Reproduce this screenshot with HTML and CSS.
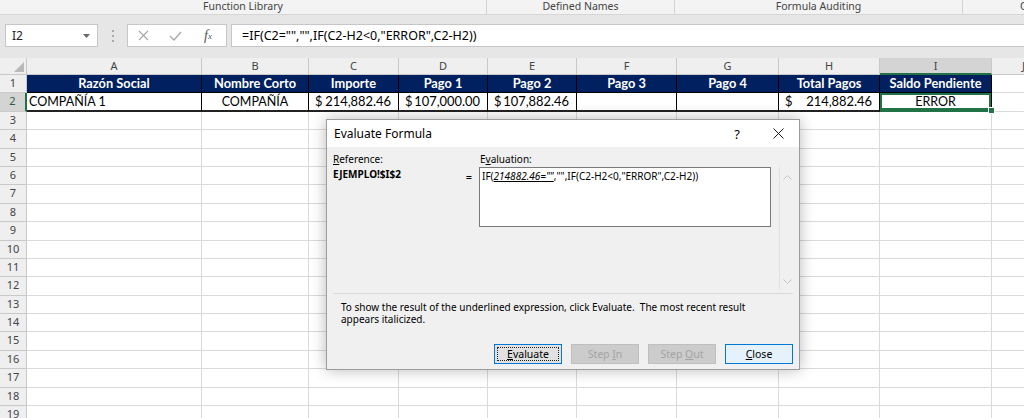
FILE: index.html
```html
<!DOCTYPE html>
<html lang="es">
<head>
    <meta charset="UTF-8">
    <title>Evaluate Formula</title>
    <link rel="stylesheet" href="styles.css">
</head>
<body>
    <div class="ribbon-labels">
        <div class="group group-functions">Function Library</div>
        <div class="group group-names">Defined Names</div>
        <div class="group group-auditing">Formula Auditing</div>
        <div class="group group-calc">Calculation</div>
    </div>

    <div class="formula-bar">
        <div class="name-box">
            <span>I2</span>
            <svg width="7" height="4" viewBox="0 0 7 4"><path d="M0 0h7L3.5 4z" fill="#6a6a6a"/></svg>
        </div>
        <div class="grip">
            <svg width="2" height="12" viewBox="0 0 2 12"><rect y="0" width="2" height="2" fill="#a8a8a8"/><rect y="5" width="2" height="2" fill="#a8a8a8"/><rect y="10" width="2" height="2" fill="#a8a8a8"/></svg>
        </div>
        <div class="fx-buttons">
            <span class="fx-icon"><svg width="11" height="11" viewBox="0 0 11 11"><path d="M1 1l9 9M10 1l-9 9" stroke="#a6a6a6" stroke-width="1.1" fill="none"/></svg></span>
            <span class="fx-icon"><svg width="13" height="10" viewBox="0 0 13 10"><path d="M1 5l4 4 7-8" stroke="#a6a6a6" stroke-width="1.2" fill="none"/></svg></span>
            <span class="fx-icon fx-text">f<sub>x</sub></span>
        </div>
        <div class="formula-input">=IF(C2="","",IF(C2-H2&lt;0,"ERROR",C2-H2))</div>
    </div>

    <div class="sheet">
        <div class="row col-heads">
            <div class="corner"><svg width="10" height="10" viewBox="0 0 10 10"><path d="M10 0v10H0z" fill="#b9b9b9"/></svg></div>
            <div>A</div><div>B</div><div>C</div><div>D</div><div>E</div>
            <div>F</div><div>G</div><div>H</div><div class="picked">I</div><div>J</div>
        </div>

        <div class="row titles">
            <div class="rh">1</div>
            <div class="th">Razón Social</div>
            <div class="th">Nombre Corto</div>
            <div class="th">Importe</div>
            <div class="th">Pago 1</div>
            <div class="th">Pago 2</div>
            <div class="th">Pago 3</div>
            <div class="th">Pago 4</div>
            <div class="th">Total Pagos</div>
            <div class="th">Saldo Pendiente</div>
            <div></div>
        </div>

        <div class="row data">
            <div class="rh picked">2</div>
            <div class="td">COMPAÑÍA 1</div>
            <div class="td center">COMPAÑÍA</div>
            <div class="td acct"><span>$</span><span>214,882.46</span></div>
            <div class="td acct"><span>$</span><span>107,000.00</span></div>
            <div class="td acct"><span>$</span><span>107,882.46</span></div>
            <div class="td"></div>
            <div class="td"></div>
            <div class="td acct"><span>$</span><span>214,882.46</span></div>
            <div class="td center selected">ERROR</div>
            <div></div>
        </div>

        <div class="row"><div class="rh">3</div><div></div><div></div><div></div><div></div><div></div><div></div><div></div><div></div><div></div><div></div></div>
        <div class="row"><div class="rh">4</div><div></div><div></div><div></div><div></div><div></div><div></div><div></div><div></div><div></div><div></div></div>
        <div class="row"><div class="rh">5</div><div></div><div></div><div></div><div></div><div></div><div></div><div></div><div></div><div></div><div></div></div>
        <div class="row"><div class="rh">6</div><div></div><div></div><div></div><div></div><div></div><div></div><div></div><div></div><div></div><div></div></div>
        <div class="row"><div class="rh">7</div><div></div><div></div><div></div><div></div><div></div><div></div><div></div><div></div><div></div><div></div></div>
        <div class="row"><div class="rh">8</div><div></div><div></div><div></div><div></div><div></div><div></div><div></div><div></div><div></div><div></div></div>
        <div class="row"><div class="rh">9</div><div></div><div></div><div></div><div></div><div></div><div></div><div></div><div></div><div></div><div></div></div>
        <div class="row"><div class="rh">10</div><div></div><div></div><div></div><div></div><div></div><div></div><div></div><div></div><div></div><div></div></div>
        <div class="row"><div class="rh">11</div><div></div><div></div><div></div><div></div><div></div><div></div><div></div><div></div><div></div><div></div></div>
        <div class="row"><div class="rh">12</div><div></div><div></div><div></div><div></div><div></div><div></div><div></div><div></div><div></div><div></div></div>
        <div class="row"><div class="rh">13</div><div></div><div></div><div></div><div></div><div></div><div></div><div></div><div></div><div></div><div></div></div>
        <div class="row"><div class="rh">14</div><div></div><div></div><div></div><div></div><div></div><div></div><div></div><div></div><div></div><div></div></div>
        <div class="row"><div class="rh">15</div><div></div><div></div><div></div><div></div><div></div><div></div><div></div><div></div><div></div><div></div></div>
        <div class="row"><div class="rh">16</div><div></div><div></div><div></div><div></div><div></div><div></div><div></div><div></div><div></div><div></div></div>
        <div class="row"><div class="rh">17</div><div></div><div></div><div></div><div></div><div></div><div></div><div></div><div></div><div></div><div></div></div>
        <div class="row"><div class="rh">18</div><div></div><div></div><div></div><div></div><div></div><div></div><div></div><div></div><div></div><div></div></div>
        <div class="row"><div class="rh">19</div><div></div><div></div><div></div><div></div><div></div><div></div><div></div><div></div><div></div><div></div></div>
    </div>

    <div class="dialog">
        <div class="dialog-title">
            <span>Evaluate Formula</span>
            <span class="title-btn help">?</span>
            <span class="title-btn close-x"><svg width="11" height="11" viewBox="0 0 11 11"><path d="M0.5 0.5l10 10M10.5 0.5l-10 10" stroke="#1a1a1a" stroke-width="1" fill="none"/></svg></span>
        </div>
        <div class="dialog-body">
            <div class="eval-grid">
                <div class="label"><u>R</u>eference:</div>
                <div></div>
                <div class="label">E<u>v</u>aluation:</div>
                <div></div>
                <div></div>

                <div class="ref-value">EJEMPLO!$I$2</div>
                <div class="equals">=</div>
                <div class="eval-box">IF(<span class="current">214882.46=""</span>,"",IF(C2-H2&lt;0,"ERROR",C2-H2))</div>
                <div></div>
                <div class="scroll">
                    <svg width="9" height="5" viewBox="0 0 9 5"><path d="M0.5 4.5l4-4 4 4" stroke="#c4c4c4" fill="none"/></svg>
                    <svg width="9" height="5" viewBox="0 0 9 5"><path d="M0.5 0.5l4 4 4-4" stroke="#c4c4c4" fill="none"/></svg>
                </div>
            </div>
            <div class="separator"></div>
            <p class="message">To show the result of the underlined expression, click Evaluate.&nbsp; The most recent result appears italicized.</p>
            <div class="buttons">
                <button class="btn focused"><u>E</u>valuate</button>
                <button class="btn" disabled>Step <u>I</u>n</button>
                <button class="btn" disabled>Step <u>O</u>ut</button>
                <button class="btn default"><u>C</u>lose</button>
            </div>
        </div>
    </div>
</body>
</html>
```

FILE: styles.css
```css
:root {
    --chrome-bg: #e6e6e6;
    --grid-line: #dadada;
    --header-bg: #efefef;
    --header-line: #c9c9c9;
    --header-picked: #d4d4d4;
    --excel-green: #217346;
    --navy: #002060;
    --dialog-bg: #f0f0f0;
    --ui-font: "Noto Sans", "Open Sans", sans-serif;
    --cell-font: Lato, "Liberation Sans", sans-serif;
    --cols: 27px 175px 107px 90px 89px 89px 100px 102px 101px 112px 64px;
}

body {
    margin: 0;
    width: 1024px;
    height: 418px;
    overflow: hidden;
    position: relative;
    background-color: var(--chrome-bg);
    font-family: var(--ui-font);
    color: #000;
}

/* ribbon group captions */
.ribbon-labels {
    display: flex;
    height: 14px;
    background-color: #f3f3f3;
    border-bottom: 1px solid #d6d6d6;
    font-size: 10.5px;
    line-height: 13px;
    color: #444;
    white-space: nowrap;
    overflow: hidden;
}

.group {
    flex-shrink: 0;
    text-align: center;
    border-right: 1px solid #d2d2d2;
    box-sizing: border-box;
}

.group-functions { width: 487px; }
.group-names { width: 188px; }
.group-auditing { width: 288px; }
.group-calc {
    border-right: none;
    text-align: left;
    padding-left: 57px;
}

/* formula bar */
.formula-bar {
    display: flex;
    height: 23px;
    margin: 9px 0 11px;
}

.name-box {
    margin-left: 5px;
    width: 93px;
    box-sizing: border-box;
    background-color: #fff;
    border: 1px solid #c6c6c6;
    display: flex;
    align-items: center;
    justify-content: space-between;
    padding: 0 7px 0 6px;
    font-size: 12px;
    color: #222;
}

.grip {
    width: 29px;
    display: flex;
    align-items: center;
    justify-content: center;
}

.fx-buttons {
    width: 100px;
    box-sizing: border-box;
    background-color: #fff;
    border: 1px solid #c6c6c6;
    display: grid;
    grid-template-columns: 31px 33px 32px;
}

.fx-icon {
    display: flex;
    align-items: center;
    justify-content: center;
}

.fx-text {
    font-family: "Liberation Serif", serif;
    font-style: italic;
    font-size: 14px;
    color: #555;
}

.fx-text sub {
    font-size: 9px;
    vertical-align: -1px;
}

.formula-input {
    flex: 1;
    margin-left: 4px;
    background-color: #fff;
    border: 1px solid #c6c6c6;
    border-right: none;
    padding-left: 10px;
    font-size: 12.5px;
    line-height: 21px;
    color: #000;
}

/* worksheet */
.row {
    display: grid;
    grid-template-columns: var(--cols);
    height: 18.4px;
}

.row > div {
    box-sizing: border-box;
    background-color: #fff;
    border-right: 1px solid var(--grid-line);
    border-bottom: 1px solid var(--grid-line);
    font-family: var(--cell-font);
    font-size: 12.5px;
    line-height: 17px;
    padding: 0 2px;
    white-space: nowrap;
    overflow: hidden;
}

.col-heads {
    height: 17px;
}

.col-heads > div,
.row > .rh {
    background-color: var(--header-bg);
    border-right-color: var(--header-line);
    border-bottom-color: var(--header-line);
    font-family: var(--ui-font);
    font-size: 11px;
    color: #444;
    text-align: center;
    line-height: 16px;
}

.col-heads > .corner {
    display: flex;
    align-items: flex-end;
    justify-content: flex-end;
    padding: 0 2px 2px 0;
}

.col-heads > .picked {
    background-color: var(--header-picked);
    border-bottom: 2px solid var(--excel-green);
}

.row > .rh.picked {
    background-color: var(--header-picked);
    border-right: 2px solid var(--excel-green);
    color: #2b5e3f;
}

.titles > .th {
    background-color: var(--navy);
    color: #fff;
    font-weight: bold;
    font-size: 12.8px;
    text-align: center;
    border-right-color: #000;
    border-bottom-color: #000;
}

.data > .td {
    border-right-color: #000;
    border-bottom: 2px solid #222;
}

.data > .center {
    text-align: center;
}

.data > .acct {
    display: flex;
    justify-content: space-between;
    padding: 0 7px 0 6px;
    font-size: 12.9px;
}

.data > .selected {
    overflow: visible;
    position: relative;
    box-shadow: inset 0 0 0 2px var(--excel-green);
    border-bottom-color: var(--excel-green);
}

.data > .selected::after {
    content: "";
    position: absolute;
    right: -4px;
    bottom: -4px;
    width: 5px;
    height: 5px;
    background-color: var(--excel-green);
    border: 1px solid #fff;
    z-index: 2;
}

/* Evaluate Formula dialog */
.dialog {
    position: absolute;
    left: 326px;
    top: 119px;
    width: 474px;
    height: 251px;
    box-sizing: border-box;
    border: 1px solid #9c9c9c;
    background-color: var(--dialog-bg);
    box-shadow: 0 0 14px rgba(0, 0, 0, 0.28);
    font-size: 10px;
    z-index: 10;
}

.dialog-title {
    height: 27px;
    background-color: #fff;
    display: flex;
    align-items: center;
    padding-left: 7px;
    font-size: 12px;
}

.title-btn {
    display: flex;
    align-items: center;
    justify-content: center;
}

.help {
    margin-left: auto;
    width: 40px;
    font-size: 13px;
}

.close-x {
    width: 42px;
}

.dialog-body {
    padding: 5px 6px 0;
}

.eval-grid {
    display: grid;
    grid-template-columns: 128px 18px 292px 8px 16px;
    grid-template-rows: 15px 122px;
}

.label {
    line-height: 14px;
}

.eval-grid .label + div + .label {
    padding-left: 1px;
}

.ref-value {
    font-weight: bold;
    line-height: 14px;
}

.equals {
    text-align: center;
    padding-top: 2px;
    padding-right: 2px;
    font-size: 11px;
}

.eval-box {
    height: 60px;
    box-sizing: border-box;
    background-color: #fff;
    border: 1px solid #7a7a7a;
    padding: 2px 2px;
    line-height: 13px;
    white-space: nowrap;
}

.current {
    font-style: italic;
    text-decoration: underline;
}

.scroll {
    border-left: 1px solid #e2e2e2;
    display: flex;
    flex-direction: column;
    align-items: center;
    justify-content: space-between;
    padding: 8px 0 5px;
}

.separator {
    margin-top: 4px;
    height: 1px;
    background-color: #d9d9d9;
}

.message {
    margin: 7px 0 0;
    padding-left: 8px;
    line-height: 12px;
    width: 430px;
}

.buttons {
    display: flex;
    justify-content: flex-end;
    gap: 9px;
    margin-top: 19px;
}

.btn {
    width: 68px;
    height: 20px;
    box-sizing: border-box;
    border: 1px solid #adadad;
    background-color: #e1e1e1;
    font-family: var(--ui-font);
    font-size: 10.5px;
    color: #000;
    padding: 0;
}

.btn.focused {
    border-color: #0078d7;
    outline: 1px dotted #222;
    outline-offset: -4px;
}

.btn:disabled {
    background-color: #cccccc;
    border-color: #bfbfbf;
    color: #a3a3a3;
}

.btn.default {
    background-color: #e5f1fb;
    border-color: #0078d7;
}
```
